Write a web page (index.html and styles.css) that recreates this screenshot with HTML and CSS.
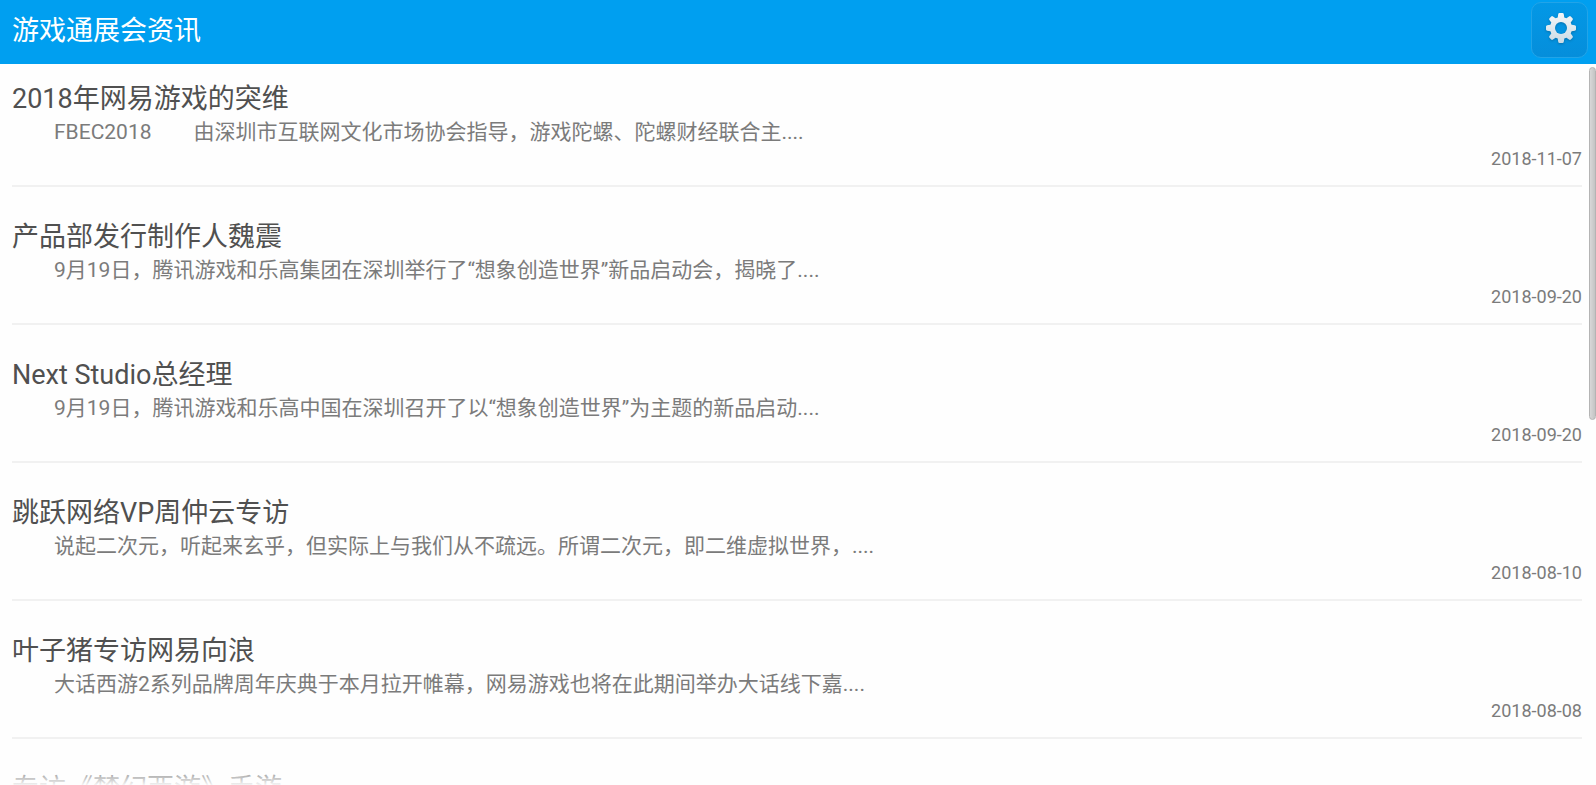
FILE: index.html
```html
<!DOCTYPE html>
<html lang="zh-CN">
<head>
<meta charset="utf-8">
<title>游戏通展会资讯</title>
<link rel="stylesheet" href="styles.css">
</head>
<body>
<header class="bar">
  <h1 class="bar-title">游戏通展会资讯</h1>
  <button class="settings" type="button" aria-label="设置">
    <svg class="gear" viewBox="0 0 30 30" aria-hidden="true">
      <defs>
        <linearGradient id="metal" x1="0" y1="0" x2="0" y2="1">
          <stop offset="0" stop-color="#f4f6f8"/>
          <stop offset="1" stop-color="#cbdbe5"/>
        </linearGradient>
        <mask id="hole">
          <rect width="30" height="30" fill="#fff"/>
          <circle cx="15" cy="15" r="6" fill="#000"/>
        </mask>
      </defs>
      <g fill="url(#metal)" mask="url(#hole)">
        <path d="M12.2 1.2Q12.4 0 13.5 0H16.5Q17.6 0 17.8 1.2L18.3 4.4L20.4 5.3L23 3.4Q24 2.7 24.8 3.5L26.5 5.2Q27.3 6 26.6 7L24.7 9.6L25.6 11.7L28.8 12.2Q30 12.4 30 13.5V16.5Q30 17.6 28.8 17.8L25.6 18.3L24.7 20.4L26.6 23Q27.3 24 26.5 24.8L24.8 26.5Q24 27.3 23 26.6L20.4 24.7L18.3 25.6L17.8 28.8Q17.6 30 16.5 30H13.5Q12.4 30 12.2 28.8L11.7 25.6L9.6 24.7L7 26.6Q6 27.3 5.2 26.5L3.5 24.8Q2.7 24 3.4 23L5.3 20.4L4.4 18.3L1.2 17.8Q0 17.6 0 16.5V13.5Q0 12.4 1.2 12.2L4.4 11.7L5.3 9.6L3.4 7Q2.7 6 3.5 5.2L5.2 3.5Q6 2.7 7 3.4L9.6 5.3L11.7 4.4Z"/>
      </g>
    </svg>
  </button>
</header>
<main class="news">
  <ul class="list">
    <li class="item">
      <h2 class="title">2018年网易游戏的突维</h2>
      <p class="summary">FBEC2018&#12288;&#12288;由深圳市互联网文化市场协会指导，游戏陀螺、陀螺财经联合主....</p>
      <time class="date">2018-11-07</time>
    </li>
    <li class="item">
      <h2 class="title">产品部发行制作人魏震</h2>
      <p class="summary">9月19日，腾讯游戏和乐高集团在深圳举行了“想象创造世界”新品启动会，揭晓了....</p>
      <time class="date">2018-09-20</time>
    </li>
    <li class="item">
      <h2 class="title">Next Studio总经理</h2>
      <p class="summary">9月19日，腾讯游戏和乐高中国在深圳召开了以“想象创造世界”为主题的新品启动....</p>
      <time class="date">2018-09-20</time>
    </li>
    <li class="item">
      <h2 class="title">跳跃网络VP周仲云专访</h2>
      <p class="summary">说起二次元，听起来玄乎，但实际上与我们从不疏远。所谓二次元，即二维虚拟世界，....</p>
      <time class="date">2018-08-10</time>
    </li>
    <li class="item">
      <h2 class="title">叶子猪专访网易向浪</h2>
      <p class="summary">大话西游2系列品牌周年庆典于本月拉开帷幕，网易游戏也将在此期间举办大话线下嘉....</p>
      <time class="date">2018-08-08</time>
    </li>
    <li class="item">
      <h2 class="title">专访《梦幻西游》手游</h2>
    </li>
  </ul>
  <div class="fade"></div>
  <div class="thumb"></div>
</main>
</body>
</html>
```
FILE: styles.css
```css
* {
  box-sizing: border-box;
}

body {
  display: flex;
  flex-direction: column;
  height: 100vh;
  margin: 0;
  overflow: hidden;
  background: #fefefe;
  font-family: Roboto, "Noto Sans CJK SC", sans-serif;
}

h1, h2, p, ul {
  margin: 0;
  padding: 0;
  font-weight: 400;
}

.bar {
  display: flex;
  flex: none;
  align-items: flex-start;
  justify-content: space-between;
  height: 64px;
  padding: 2px 8px 0 12px;
  background: #009ff0;
}

.bar-title {
  color: #fff;
  font-size: 27px;
  line-height: 58px;
}

.settings {
  display: flex;
  justify-content: center;
  width: 57px;
  height: 56px;
  padding: 10px 0 0 3px;
  border: 1px solid #22a4e8;
  border-radius: 10px;
  background: linear-gradient(#0398e6, #058edb);
}

.gear {
  width: 30px;
  height: 30px;
  filter: drop-shadow(0 1px 1px #0672ae);
}

.news {
  position: relative;
  flex: 1;
  min-height: 0;
  overflow: hidden;
}

.list {
  display: flex;
  flex-direction: column;
  gap: 15px;
  padding: 0 14px 0 12px;
  list-style: none;
}

.item {
  display: flex;
  flex-direction: column;
  padding: 15px 0 12px;
  border-bottom: 2px solid #f1f1f1;
}

.title {
  color: #505050;
  font-size: 27px;
  line-height: 40px;
}

.summary {
  color: #7b7b7b;
  font-size: 21px;
  line-height: 26px;
  text-indent: 2em;
}

.date {
  align-self: flex-end;
  color: #7b7b7b;
  font-size: 18px;
  line-height: 28px;
}

.fade {
  position: absolute;
  right: 0;
  bottom: 0;
  left: 0;
  height: 24px;
  background: linear-gradient(#fefefe00, #fefefef0);
}

.thumb {
  position: absolute;
  top: 3px;
  right: 0;
  width: 7px;
  height: 49%;
  border: 1px solid #b4b4b4;
  border-radius: 4px;
  background: linear-gradient(90deg, #d8d8d8, #c4c4c4);
}
```
